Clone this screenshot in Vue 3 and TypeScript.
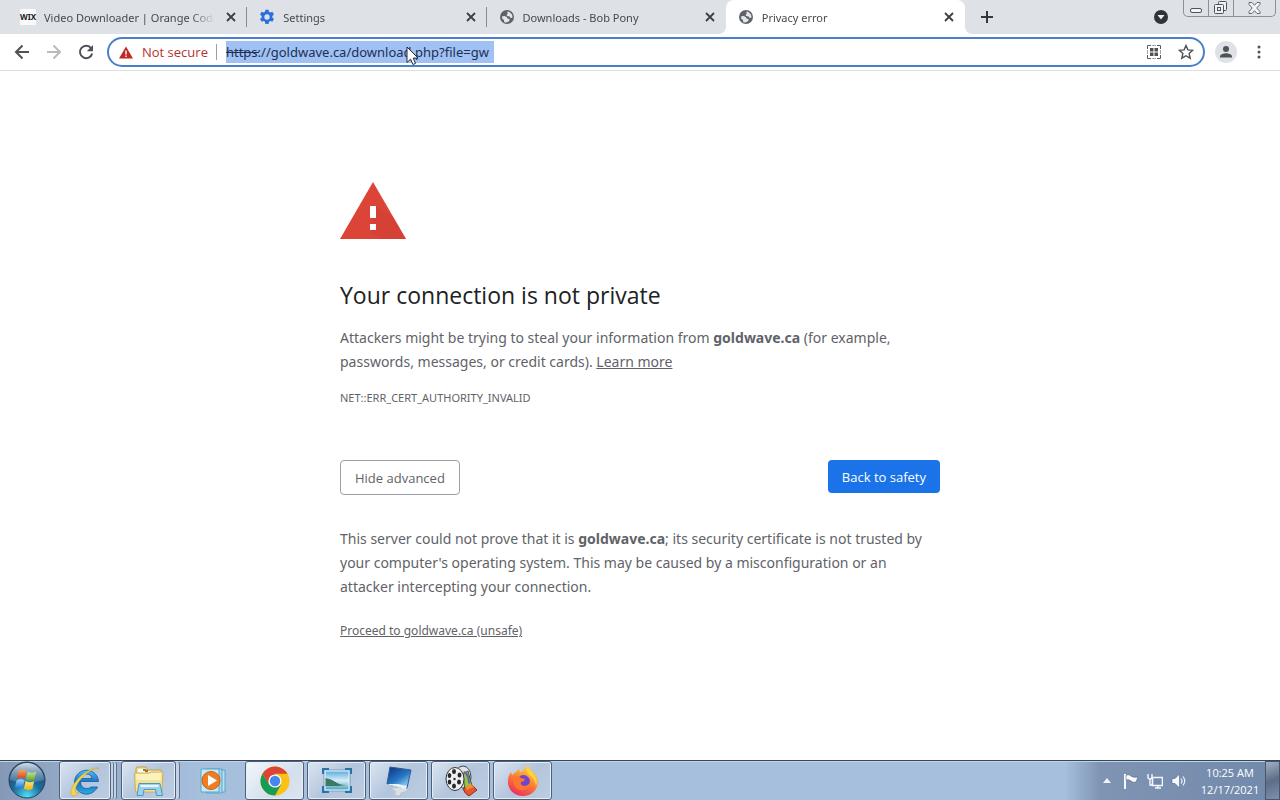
<script setup lang="ts">
import { ref } from 'vue'

interface Tab {
  title: string
  icon: 'wix' | 'gear' | 'globe'
  active?: boolean
}

const tabs: Tab[] = [
  { title: 'Video Downloader | Orange Code', icon: 'wix' },
  { title: 'Settings', icon: 'gear' },
  { title: 'Downloads - Bob Pony', icon: 'globe' },
  { title: 'Privacy error', icon: 'globe', active: true },
]

const url = ref('https://goldwave.ca/download.php?file=gw')

const apps = [
  { id: 'ie', name: 'Internet Explorer', kind: 'framed stacked' },
  { id: 'explorer', name: 'Windows Explorer', kind: 'framed stacked' },
  { id: 'wmp', name: 'Windows Media Player', kind: 'plain' },
  { id: 'chrome', name: 'Google Chrome', kind: 'framed current' },
  { id: 'photos', name: 'Picture Viewer', kind: 'framed' },
  { id: 'display', name: 'Personalization', kind: 'framed' },
  { id: 'movie', name: 'Movie Maker', kind: 'framed' },
  { id: 'firefox', name: 'Firefox', kind: 'framed' },
]
</script>

<template>
  <div class="desktop">
    <header class="tabstrip">
      <div class="tabs" role="tablist">
        <div v-for="tab in tabs" :key="tab.title" class="tab" :class="{ active: tab.active }" role="tab" :aria-selected="!!tab.active">
          <span v-if="tab.icon === 'wix'" class="wix">WIX</span>
          <svg v-else-if="tab.icon === 'gear'" class="favicon" viewBox="0 0 24 24" aria-hidden="true">
            <path fill="#2a6fdb" fill-rule="evenodd" d="M9.6 1h4.800l.6 3.100 2 1.100 3-1 2.400 4.100-2.400 2.100v2.400l2.400 2.200-2.400 4.100-3-1-2 1.200-.6 3.100H9.600L9 19.300l-2-1.200-3 1L1.600 15 4 12.800v-2.400L1.600 8.300 4 4.200l3 1 2-1.100zM12 8a4 4 0 1 0 0 8 4 4 0 0 0 0-8z" />
          </svg>
          <svg v-else class="favicon" viewBox="0 0 16 16" aria-hidden="true">
            <circle cx="8" cy="8" r="7" fill="#5f6368" />
            <path fill="#e3e5e9" d="M2.800 7.500L5.500 7l2.300 1 .7 1.500 2.300.8-.8 2-2.500 1.200-2.300-.3-.2-2.200-1.500-1zM8.300 2.600l2.200.5 2.500 2.500.6 2.600-1.800 1-1.200-1.700-2.400-.4-.7-1.200 1.200-1.200z" />
          </svg>
          <span class="tab-title">{{ tab.title }}</span>
          <button class="tab-close" type="button" :aria-label="'Close ' + tab.title">
            <svg viewBox="0 0 10 10" aria-hidden="true"><path d="M1 1l8 8M9 1L1 9" stroke="#3c4043" stroke-width="1.800" /></svg>
          </button>
        </div>
      </div>
      <button class="new-tab" type="button" aria-label="New tab">
        <svg viewBox="0 0 12 12" aria-hidden="true"><path d="M6 0v12M0 6h12" stroke="#35383c" stroke-width="2" /></svg>
      </button>
      <button class="tab-search" type="button" aria-label="Search tabs">
        <svg viewBox="0 0 14 14" aria-hidden="true"><circle cx="7" cy="7" r="7" fill="#303338" /><path d="M3.500 5h7L7 9.500z" fill="#eef0f3" /></svg>
      </button>
      <div class="window-controls">
        <button type="button" aria-label="Minimize">
          <svg width="13" height="6" viewBox="0 0 13 6"><rect x=".5" y=".5" width="11" height="4" rx="1.500" fill="#f3f4f7" stroke="#4c5361" /></svg>
        </button>
        <button type="button" aria-label="Restore">
          <svg width="14" height="14" viewBox="0 0 14 14" fill="#eef0f4" stroke="#4c5361"><rect x="4.500" y=".5" width="8" height="9" rx="1" /><rect x=".5" y="3.500" width="9" height="9" rx="1" /><rect x="3.500" y="6.500" width="3" height="3" /></svg>
        </button>
        <button class="close" type="button" aria-label="Close window">
          <svg width="13" height="12" viewBox="0 0 13 12"><path d="M1 .5h3l2.500 2.800L9 .5h3v2L8.700 6 12 9.500v2H9L6.500 8.700 4 11.500H1v-2L4.300 6 1 2.500z" fill="#f3f4f7" stroke="#656c79" /></svg>
        </button>
      </div>
    </header>

    <nav class="toolbar" aria-label="Browser toolbar">
      <button class="nav-btn" type="button" aria-label="Back">
        <svg viewBox="0 0 16 16" fill="none" stroke="#4e5256" stroke-width="2"><path d="M15 8H2M8.500 1.500L2 8l6.500 6.500" /></svg>
      </button>
      <button class="nav-btn" type="button" aria-label="Forward">
        <svg viewBox="0 0 16 16" fill="none" stroke="#b9bbbe" stroke-width="2"><path d="M1 8h13M7.500 1.500L14 8l-6.500 6.500" /></svg>
      </button>
      <button class="nav-btn" type="button" aria-label="Reload">
        <svg viewBox="0 0 16 16"><path d="M13.200 4.300A6.200 6.200 0 1 0 14.200 9.500" fill="none" stroke="#4e5256" stroke-width="2" /><path d="M15 1v6.200H8.800z" fill="#4e5256" /></svg>
      </button>
      <div class="omnibox">
        <svg class="warn" viewBox="0 0 14 13" aria-hidden="true"><path d="M7 .5L14 12.500H0z" fill="#bf2a24" /><path d="M6.300 4.500h1.400v4H6.300zM6.300 9.500h1.400v1.400H6.300z" fill="#fff" /></svg>
        <span class="not-secure">Not secure</span>
        <span class="divider"></span>
        <div class="url-wrap">
          <input v-model="url" class="url" type="text" aria-label="Address and search bar" spellcheck="false" />
          <span class="strike"></span>
          <svg class="cursor" viewBox="0 0 13 20" aria-hidden="true"><path d="M1 1v15.500l3.600-3.400 2.300 5.400 2.600-1.100-2.300-5.300h4.900z" fill="#fff" stroke="#222838" /></svg>
        </div>
        <button class="mini" type="button" aria-label="Create QR code">
          <svg viewBox="0 0 16 16" fill="none" stroke="#5a5e62"><path d="M1.500 5V1.500H5M11 1.500h3.500V5M14.500 11v3.500H11M5 14.500H1.500V11" /><path d="M6 1.500h4M6 14.500h4M1.500 6v4M14.500 6v4" stroke="#a4a7aa" /><path d="M4 4h3.500v3.500H4zM8.500 4H12v3.500H8.500zM4 8.500h3.500V12H4zM8.500 8.500H12V12H8.500z" fill="#4e5256" stroke="none" /></svg>
        </button>
        <button class="mini" type="button" aria-label="Bookmark this page">
          <svg viewBox="0 0 16 16"><path d="M8 1.500l1.900 4.400 4.800.4-3.600 3.200 1.100 4.700L8 11.700l-4.200 2.500 1.100-4.700L1.300 6.300l4.800-.4z" fill="none" stroke="#4e5256" stroke-width="1.400" /></svg>
        </button>
      </div>
      <button class="avatar" type="button" aria-label="Profile">
        <svg viewBox="0 0 22 22"><circle cx="11" cy="11" r="11" fill="#dee1e6" /><circle cx="11" cy="8" r="3" fill="#4e5358" /><path d="M5 16.500v-1.200c0-2 4-3.100 6-3.100s6 1.100 6 3.100v1.200z" fill="#4e5358" /></svg>
      </button>
      <button class="menu" type="button" aria-label="Menu">
        <svg viewBox="0 0 4 14" fill="#4e5256"><circle cx="2" cy="2" r="1.500" /><circle cx="2" cy="7" r="1.500" /><circle cx="2" cy="12" r="1.500" /></svg>
      </button>
    </nav>

    <main class="page">
      <div class="interstitial">
        <svg class="big-warn" viewBox="0 0 66 57" aria-hidden="true">
          <path d="M33 0l33 57H0z" fill="#db4437" />
          <path d="M36 24L53 35l13 22H40l-10-9z" fill="#cf4034" opacity=".5" />
          <path d="M30 24h6v12h-6zM30 42h6v6h-6z" fill="#fff" />
        </svg>
        <h1>Your connection is not private</h1>
        <p>Attackers might be trying to steal your information from <strong>goldwave.ca</strong> (for example, passwords, messages, or credit cards). <a href="#">Learn more</a></p>
        <div class="code">NET::ERR_CERT_AUTHORITY_INVALID</div>
        <div class="actions">
          <button class="secondary" type="button">Hide advanced</button>
          <button class="primary" type="button">Back to safety</button>
        </div>
        <p class="details">This server could not prove that it is <strong>goldwave.ca</strong>; its security certificate is not trusted by your computer's operating system. This may be caused by a misconfiguration or an attacker intercepting your connection.</p>
        <a class="proceed" href="#">Proceed to goldwave.ca (unsafe)</a>
      </div>
    </main>

    <footer class="taskbar">
      <button class="start" type="button" aria-label="Start">
        <svg viewBox="0 0 38 38">
          <defs>
            <radialGradient id="orb" cx=".5" cy=".95" r=".9"><stop offset="0" stop-color="#4fe0f5" /><stop offset=".45" stop-color="#1c6d9e" /><stop offset="1" stop-color="#244467" /></radialGradient>
            <linearGradient id="gloss" x2="0" y2="1"><stop offset="0" stop-color="#e6f0f8" stop-opacity=".9" /><stop offset="1" stop-color="#8fabc7" stop-opacity=".3" /></linearGradient>
            <linearGradient id="fr" x2="0" y2="1"><stop offset="0" stop-color="#f8a254" /><stop offset="1" stop-color="#d9401f" /></linearGradient>
            <linearGradient id="fg" x2="0" y2="1"><stop offset="0" stop-color="#cde58c" /><stop offset="1" stop-color="#58a832" /></linearGradient>
            <linearGradient id="fb" x2="0" y2="1"><stop offset="0" stop-color="#9bd6fa" /><stop offset="1" stop-color="#2376ce" /></linearGradient>
            <linearGradient id="fy" x2="0" y2="1"><stop offset="0" stop-color="#ffe373" /><stop offset="1" stop-color="#f2b31b" /></linearGradient>
          </defs>
          <circle cx="19" cy="19" r="18" fill="url(#orb)" stroke="#28435f" />
          <path d="M2 19a17 17 0 0 1 34 0q-17 5-34 0z" fill="url(#gloss)" />
          <path d="M10.500 10q4-2.500 8 0l-1.700 8q-4-2.400-8 0z" fill="url(#fr)" />
          <path d="M19.700 10.500q4 2.500 8.500.2l-1.800 8q-4.400 2.100-8.500-.2z" fill="url(#fg)" />
          <path d="M8.500 19.500q4-2.300 8 0l-1.700 7.800q-4-2.300-8 0z" fill="url(#fb)" />
          <path d="M17.600 20q4 2.300 8.500.2l-1.700 7.700q-4.500 2.100-8.500-.1z" fill="url(#fy)" />
        </svg>
      </button>
      <div class="apps">
        <button v-for="app in apps" :key="app.id" type="button" class="app" :class="[app.kind, app.id]" :aria-label="app.name">
          <svg v-if="app.id === 'ie'" viewBox="0 0 32 32">
            <defs><linearGradient id="ieb" x2="0" y2="1"><stop offset="0" stop-color="#55bdf1" /><stop offset=".5" stop-color="#1672c5" /><stop offset="1" stop-color="#2ba9e4" /></linearGradient></defs>
            <path d="M28.500 22a12 12 0 1 1 1-5.500H11.500q.3 7 6 7 3 0 4.500-1.500zM11.500 13.500h11.500q-.8-4.500-5.500-4.500t-6 4.500z" fill="url(#ieb)" stroke="#124f94" stroke-width=".7" fill-rule="evenodd" />
            <path d="M2.500 30C-.5 26 7 14 15 8.500 22 3.500 29 1 30 4c-3-1.500-8 1-13 5C10 15 5 23 6.500 27c.3 2 3 1 5-.5C8 29.500 4.500 32 2.500 30z" fill="#f4d548" stroke="#c5a32c" stroke-width=".5" />
          </svg>
          <svg v-else-if="app.id === 'explorer'" viewBox="0 0 32 32">
            <path d="M3 4l1-2h9l2 3h13v4H3z" fill="#f7dc83" stroke="#c4a14b" />
            <path d="M5 4h8v4H5zM15 6h6v4h-6zM22 6h6v4h-6z" fill="#fcfbf4" /><path d="M10 4h3v2h-3z" fill="#49a353" /><path d="M12 5h3v2h-3z" fill="#da4e35" /><path d="M25 7h3v2h-3z" fill="#428cc9" />
            <path d="M1.500 8h14l3-1h11.500L29 27H2.500z" fill="#f5e394" stroke="#c9b15b" />
            <path d="M3 9h13l3-1h9l-.5 7H3.500z" fill="#fbf2be" />
            <path d="M6 18.500h21l2.500 12h-6l-1-6H11l-1 6H4z" fill="#9dd0ec" stroke="#4b98c5" /><path d="M7.500 21h18" stroke="#e5f8ff" stroke-width="2" />
          </svg>
          <svg v-else-if="app.id === 'wmp'" viewBox="0 0 32 32">
            <path d="M14 5h14v22H14z" fill="#b9e3f4" stroke="#5aa4c9" /><path d="M9 4h16v24H9z" fill="#a3d5ec" stroke="#5aa4c9" /><path d="M4 4h18v23H4z" fill="#c6e9f6" stroke="#5aa4c9" />
            <circle cx="14" cy="15.500" r="9" fill="#ef7d22" stroke="#cf5c13" /><path d="M11 10l9 5.500-9 5.500z" fill="#fff" />
          </svg>
          <svg v-else-if="app.id === 'chrome'" viewBox="0 0 32 32">
            <circle cx="16" cy="16" r="14.500" fill="#fbc116" />
            <path d="M16 16L10 19.500 3.500 8.700A14.500 14.500 0 0 1 28.500 8.700H16z" fill="#dc4437" />
            <path d="M3.500 8.700A14.500 14.500 0 0 0 16 30.500l6.100-11L16 16l-6 3.500z" fill="#189b55" />
            <circle cx="16" cy="16" r="6.600" fill="#f6f8fa" /><circle cx="16" cy="16" r="5.200" fill="#4687ef" />
          </svg>
          <svg v-else-if="app.id === 'photos'" viewBox="0 0 32 32">
            <defs><linearGradient id="sky" x2="0" y2="1"><stop offset="0" stop-color="#5eb0e4" /><stop offset=".5" stop-color="#d9edf3" /><stop offset="1" stop-color="#4fa7c3" /></linearGradient></defs>
            <path d="M3 5h26v21H3z" fill="#f4fafd" stroke="#76a1bb" /><path d="M4.500 6.500h23v18h-23z" fill="url(#sky)" /><path d="M4.500 13q6 1 10 4t10 3l-7 1h-13z" fill="#3d7765" />
            <path d="M2 9V4h6M24 4h6v5M30 21v6h-6M8 27H2v-6" fill="none" stroke="#2674a9" stroke-width="2" />
          </svg>
          <svg v-else-if="app.id === 'display'" viewBox="0 0 32 32">
            <defs><linearGradient id="scr" x2=".7" y2="1"><stop offset="0" stop-color="#0a327e" /><stop offset=".6" stop-color="#2876c5" /><stop offset="1" stop-color="#97d6f3" /></linearGradient></defs>
            <path d="M8 23l14-1 3 4-7 2-1 3q-4 0-6-2l2-2z" fill="#dbe0e5" stroke="#bbc3cb" /><path d="M7 2l21 3-4 18-20-4z" fill="url(#scr)" stroke="#355a91" /><path d="M3 19l20 5 1-3-9-2z" fill="#e6f3fa" />
          </svg>
          <svg v-else-if="app.id === 'movie'" viewBox="0 0 32 32">
            <ellipse cx="18" cy="12" rx="8" ry="11" fill="#e1e3e5" stroke="#424549" /><path d="M18 9l5-3 4 15-7 5z" fill="#92c547" stroke="#405f31" /><path d="M20 6q5 3 5 13l-2-1Q23 11 18 7z" fill="#6e62b1" />
            <ellipse cx="10" cy="14" rx="9" ry="11.500" fill="#eef0f0" stroke="#33363a" /><g fill="#26282b"><ellipse cx="9" cy="6.500" rx="2" ry="2.500" /><ellipse cx="14.500" cy="10" rx="2" ry="2.500" /><ellipse cx="14" cy="17" rx="2" ry="2.500" /><ellipse cx="9" cy="21" rx="2" ry="2.500" /><ellipse cx="4.500" cy="17" rx="1.800" ry="2.500" /><ellipse cx="4.500" cy="10.500" rx="1.800" ry="2.500" /><circle cx="9.500" cy="14" r="1.200" /></g>
            <path d="M18 24l9-4 5 5-8 6q-4-2-6-7z" fill="#e55432" stroke="#922d20" />
            <path d="M20 22l6-3 3 3-7 3z" fill="#f18f2c" />
          </svg>
          <svg v-else viewBox="0 0 32 32">
            <defs><linearGradient id="fox" x1=".8" x2=".3" y2="1"><stop offset="0" stop-color="#ffe34c" /><stop offset=".45" stop-color="#ff8b2e" /><stop offset="1" stop-color="#ed2b60" /></linearGradient></defs>
            <path d="M18 3q2-1 3-3 1 4 4 6t5 7c3 10-4 18-14 18S0 23 1 15q0-4 3-8l1 3 4-3q1-2 3-3l1 3q3-1 5-4z" fill="url(#fox)" />
            <circle cx="16.500" cy="16.500" r="6.500" fill="#7144cf" /><path d="M6 12q5-2 8 1l4 1q-1 3-4 3-1 3 3 4 4 0 6-4 0 8-8 8-9 0-9-13z" fill="#fc762e" />
            <path d="M21 1q1 4 4 6 7 8 4 14-1-8-8-12-4-4 0-8z" fill="#ffd43a" />
          </svg>
        </button>
      </div>
      <div class="tray">
        <svg class="up" viewBox="0 0 8 5" aria-label="Show hidden icons"><path d="M4 0l4 5H0z" fill="#eef3f8" /></svg>
        <svg class="tray-icon" viewBox="0 0 16 16" aria-label="Action Center"><path d="M2 1v15" stroke="#f7fafc" stroke-width="2" /><path d="M3 2q3-1 5 1t7 1l-2 5q-3 1-5-1t-5-1z" fill="#f7fafc" stroke="#405473" stroke-width=".5" /></svg>
        <svg class="tray-icon" viewBox="0 0 16 16" aria-label="Network"><path d="M5.500 4.500h10v8h-10zM8 15h6M11 12.500V15" fill="#728aab" stroke="#f3f7fb" stroke-width="1.600" /><path d="M1 1v3q0 2 2 2t2-2V1M3 6v6h3" fill="none" stroke="#f3f7fb" stroke-width="1.400" /></svg>
        <svg class="tray-icon" viewBox="0 0 16 16" aria-label="Volume"><path d="M1 5.500h3L8.500 1v14L4 10.500H1z" fill="#f5f8fb" stroke="#405473" stroke-width=".5" /><path d="M10 5.500q2 2.500 0 5M12 3.500q3.500 4.500 0 9" fill="none" stroke="#edf3f9" stroke-width="1.200" /></svg>
        <div class="clock"><time>10:25 AM</time><time>12/17/2021</time></div>
        <button class="show-desktop" type="button" aria-label="Show desktop"></button>
      </div>
    </footer>
  </div>
</template>

<style>
body {
  margin: 0;
}
</style>

<style scoped>
* {
  box-sizing: border-box;
}
button {
  padding: 0;
  border: 0;
  background: none;
  font: inherit;
  color: inherit;
}
svg {
  display: block;
}
.desktop {
  min-height: 100vh;
  display: flex;
  flex-direction: column;
  background: #fff;
  font-family: "Open Sans", "Noto Sans", sans-serif;
}

/* Tab strip */
.tabstrip {
  height: 34px;
  padding-left: 8px;
  display: flex;
  align-items: center;
  background: #dee1e6;
}
.tabs {
  display: flex;
  flex: 0 1 957px;
  min-width: 0;
  height: 34px;
}
.tab {
  flex: 1 1 0;
  min-width: 0;
  display: flex;
  align-items: center;
  gap: 8px;
  padding: 0 8px 0 12px;
  font-family: "Noto Sans", "Open Sans", sans-serif;
  font-size: 11px;
  color: #45494e;
  position: relative;
}
.tab:not(.active):not(:nth-last-child(2))::after {
  content: "";
  position: absolute;
  right: 0;
  top: 7px;
  width: 1px;
  height: 20px;
  background: #888c93;
}
.tab.active {
  background: #fff;
  border-radius: 8px 8px 0 0;
}
.tab.active::before,
.tab.active::after {
  content: "";
  position: absolute;
  bottom: 0;
  width: 8px;
  height: 8px;
}
.tab.active::before {
  left: -8px;
  background: radial-gradient(circle at 0 0, #dee1e6 8px, #fff 8px);
}
.tab.active::after {
  right: -8px;
  background: radial-gradient(circle at 100% 0, #dee1e6 8px, #fff 8px);
}
.favicon,
.wix {
  flex: none;
  width: 16px;
  height: 16px;
}
.wix {
  background: #f8f9fa;
  font-size: 8px;
  line-height: 16px;
  font-weight: 700;
  color: #16181a;
  text-align: center;
}
.tab-title {
  flex: 1;
  overflow: hidden;
  white-space: nowrap;
  mask-image: linear-gradient(to right, #000 calc(100% - 24px), transparent);
}
.tab-close {
  width: 16px;
  height: 16px;
  display: grid;
  place-items: center;
}
.tab-close svg {
  width: 10px;
  height: 10px;
}
.new-tab {
  width: 28px;
  height: 28px;
  margin-left: 8px;
  display: grid;
  place-items: center;
}
.new-tab svg {
  width: 12px;
  height: 12px;
}
.tab-search {
  margin-left: auto;
  margin-right: 15px;
}
.tab-search svg {
  width: 14px;
  height: 14px;
}
.window-controls {
  align-self: flex-start;
  display: flex;
  height: 17px;
  margin-right: 4px;
  border: 1px solid #8b909b;
  border-top: 0;
  border-radius: 0 0 5px 5px;
}
.window-controls button {
  width: 25px;
  display: grid;
  place-items: center;
  border-right: 1px solid #8b909b;
}
.window-controls button:first-child {
  align-items: end;
  padding-bottom: 2px;
}
.window-controls .close {
  width: 41px;
  border-right: 0;
}

/* Toolbar */
.toolbar {
  height: 37px;
  display: flex;
  align-items: center;
  padding: 0 12px 0 14px;
  border-bottom: 1px solid #dcdee1;
}
.nav-btn {
  width: 16px;
  height: 16px;
  margin-right: 16px;
}
.nav-btn:nth-of-type(3) {
  margin-right: 13px;
}
.omnibox {
  flex: 1;
  height: 30px;
  display: flex;
  align-items: center;
  padding: 0 9px 0 10px;
  border: 2px solid #4a7fcb;
  border-radius: 15px;
  font-size: 13px;
}
.warn {
  width: 14px;
  height: 13px;
  margin-right: 9px;
}
.not-secure {
  color: #b5332d;
  white-space: nowrap;
}
.divider {
  width: 1px;
  height: 16px;
  margin: 0 9px 0 8px;
  background: #9a9da1;
}
.url-wrap {
  position: relative;
  margin-right: auto;
}
.url {
  display: block;
  width: 268px;
  height: 22px;
  padding: 0;
  border: 0;
  outline: 0;
  background: #a1c0f4;
  font-family: "Noto Sans", "Open Sans", sans-serif;
  font-size: 13px;
  color: #1b3052;
}
.strike {
  position: absolute;
  left: 0;
  top: 11px;
  width: 33px;
  height: 1px;
  background: #1b3052;
}
.cursor {
  position: absolute;
  left: 180px;
  top: 5px;
  width: 13px;
  height: 20px;
}
.mini {
  width: 16px;
  height: 16px;
  margin-left: 16px;
}
.avatar {
  width: 22px;
  height: 22px;
  margin-left: 10px;
}
.menu {
  width: 4px;
  height: 14px;
  margin: 0 7px 0 20px;
}

/* Warning page */
.page {
  flex: 1;
  padding: 111px 24px 24px;
}
.interstitial {
  max-width: 600px;
  margin: 0 auto;
  font-size: 14px;
  line-height: 24px;
  color: #5f6368;
}
.big-warn {
  width: 66px;
  height: 57px;
}
h1 {
  margin: 40px 0 15px;
  font-size: 23px;
  line-height: 32px;
  font-weight: 400;
  color: #202124;
}
p {
  margin: 0;
  padding-right: 8px;
  font-family: "Noto Sans", "Open Sans", sans-serif;
}
a {
  color: inherit;
}
.code {
  margin-top: 12px;
  font-family: "Noto Sans", "Open Sans", sans-serif;
  font-size: 11px;
}
.actions {
  display: flex;
  justify-content: space-between;
  align-items: flex-start;
  margin: 50px 0 32px;
  font-size: 13px;
}
.secondary {
  height: 35px;
  padding: 0 14px;
  border: 1px solid #9aa0a6;
  border-radius: 4px;
}
.primary {
  height: 33px;
  padding: 0 14px;
  border-radius: 4px;
  background: #1a73e8;
  color: #fff;
}
.proceed {
  display: inline-block;
  margin-top: 20px;
  font-family: "Noto Sans", "Open Sans", sans-serif;
  font-size: 12px;
}

/* Taskbar */
.taskbar {
  height: 40px;
  display: flex;
  align-items: stretch;
  border-top: 1px solid #35475e;
  box-shadow: inset 0 1px 0 #c3d3e4;
  background: linear-gradient(to right, #8599b7 0, #93a8c5 60px, #a5bfdc 200px, #a5bfdc calc(100% - 215px), #7f94b3 calc(100% - 180px), #7189ab 100%);
}
.start {
  width: 38px;
  height: 38px;
  margin: 0 13px 0 8px;
}
.apps {
  display: flex;
  gap: 3px;
}
.app {
  width: 59px;
  height: 39px;
  display: grid;
  place-items: center;
}
.app svg {
  width: 32px;
  height: 32px;
}
.framed {
  border: 1px solid #4e6078;
  border-radius: 3px;
  background: linear-gradient(135deg, #dbe5f1, #b3c5dd 50%, #bccde2);
  box-shadow: inset 0 0 0 1px #e5edf6;
}
.stacked {
  width: 52px;
  margin-right: 7px;
  box-shadow: inset 0 0 0 1px #e5edf6, 3px 0 0 -1px #c4d2e5, 4px 0 0 -1px #60738d, 6px 0 0 -1px #c4d2e5, 7px 0 0 -1px #60738d;
}
.explorer {
  width: 55px;
  margin-right: 4px;
  box-shadow: inset 0 0 0 1px #e5edf6, 4px 0 0 -1px #c4d2e5, 5px 0 0 -1px #60738d;
}
.current {
  background: linear-gradient(135deg, #f3f7fb, #d3dfec 60%, #dbe5f0);
}
.tray {
  margin-left: auto;
  display: flex;
  align-items: center;
  color: #fff;
}
.up {
  width: 8px;
  height: 5px;
  margin-right: 12px;
}
.tray-icon {
  width: 16px;
  height: 16px;
  margin-right: 8px;
}
.clock {
  width: 70px;
  display: flex;
  flex-direction: column;
  align-items: center;
  font-size: 11px;
  line-height: 17px;
}
.show-desktop {
  width: 15px;
  height: 39px;
  border: 1px solid #46566c;
  background: linear-gradient(160deg, #a1afc2, #5c6e87 50%, #7b90ae);
}
</style>
